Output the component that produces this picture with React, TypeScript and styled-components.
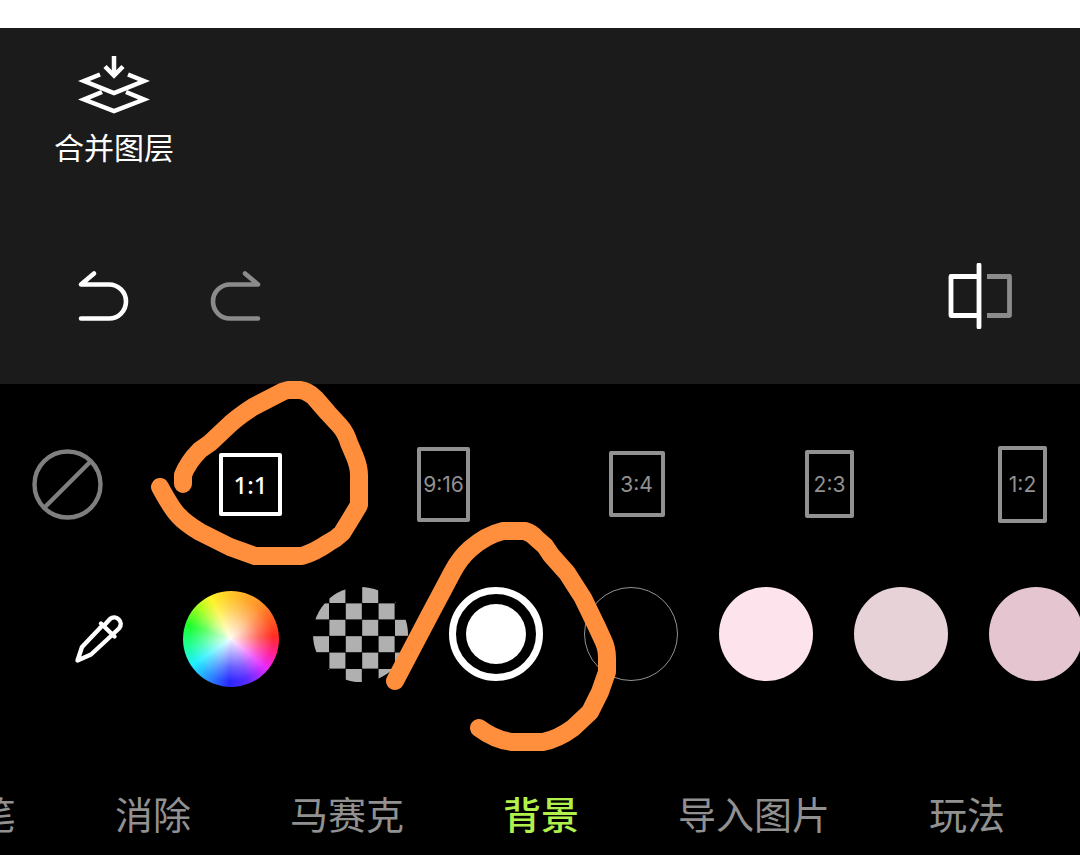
import React, { useState } from "react";
import styled, { createGlobalStyle } from "styled-components";

const GlobalStyle = createGlobalStyle`
  *, *::before, *::after { box-sizing: border-box; }
  body { margin: 0; background: #fff; font-family: "Noto Sans CJK SC", sans-serif; }
  button { margin: 0; padding: 0; border: 0; background: none; color: inherit; font: inherit; cursor: pointer; }
  svg { display: block; }
`;

const Page = styled.div`
  position: relative;
  display: flex;
  flex-direction: column;
  min-height: 100vh;
  padding-top: 28px;
  overflow: hidden;
`;

const Stage = styled.section`
  padding: 27px 67px 55px 54px;
  background: #1b1b1b;
  color: #fff;
`;

const LayerAction = styled.button`
  display: flex;
  flex-direction: column;
  align-items: center;
  gap: 13px;
  font-size: 30px;
  line-height: 36px;
`;

const HistoryBar = styled.div`
  display: flex;
  align-items: center;
  justify-content: space-between;
  margin-top: 99px;
  padding-left: 22px;
`;

const HistoryButtons = styled.div`
  display: flex;
  gap: 80px;
`;

const IconButton = styled.button<{ $dim?: boolean }>`
  color: ${(p) => (p.$dim ? "#8b8b8b" : "#fff")};
`;

const Panel = styled.section`
  flex: 1;
  padding-top: 60px;
  background: #000;
  color: #919191;
`;

const RatioRow = styled.div`
  display: flex;
  align-items: center;
  height: 80px;
  overflow: hidden;
`;

const NoRatio = styled.button`
  flex: none;
  width: 154px;
  padding-left: 32px;
  color: #7f7f7f;
`;

const RatioCell = styled.div`
  display: flex;
  flex: none;
  justify-content: center;
  width: 193px;
`;

const RatioButton = styled.button<{ $w: number; $h: number; $active: boolean }>`
  width: ${(p) => p.$w}px;
  height: ${(p) => p.$h}px;
  padding-top: 2px;
  border: 4px solid ${(p) => (p.$active ? "#fff" : "#919191")};
  border-radius: 2px;
  color: ${(p) => (p.$active ? "#fff" : "#919191")};
  font-family: ${(p) => (p.$active ? '"Noto Sans", sans-serif' : 'Inter, sans-serif')};
  font-weight: ${(p) => (p.$active ? 500 : 400)};
  font-size: ${(p) => (p.$active ? 24 : 21)}px;
  line-height: 24px;
  white-space: nowrap;
`;

const ColorRow = styled.div`
  display: flex;
  margin-top: 63px;
  overflow: hidden;
`;

const PickerGroup = styled.div`
  display: flex;
  flex: none;
  align-items: center;
  gap: 59px;
  width: 293px;
  padding: 4px 0 0 74px;
  color: #fff;
`;

const Wheel = styled.button`
  width: 96px;
  height: 96px;
  border-radius: 50%;
  background:
    radial-gradient(circle, rgba(255, 255, 255, 0.95) 0%, rgba(255, 255, 255, 0.65) 18%, rgba(255, 255, 255, 0.25) 42%, rgba(255, 255, 255, 0) 62%),
    conic-gradient(#ffc62a, #ff8f2a 42deg, #ff2d20 86deg, #ff20a0 112deg, #e62cff 130deg, #5a2cff 158deg, #2a28ff 182deg, #2c90ff 210deg, #20f0ff 236deg, #1eff90 262deg, #1eff2c 288deg, #a8ff20 314deg, #fff22a 334deg, #ffc62a);
`;

const SwatchCell = styled.div`
  display: flex;
  flex: none;
  align-items: flex-start;
  justify-content: center;
  width: 135px;
`;

const Swatch = styled.button<{ $color: string; $active: boolean; $outlined?: boolean }>`
  width: 94px;
  height: 94px;
  border: ${(p) => (p.$active ? "7px solid #fff" : p.$outlined ? "1px solid #929292" : "0")};
  border-radius: 50%;
  padding: ${(p) => (p.$active ? "10px" : "0")};
  background: ${(p) => p.$color};
  background-clip: ${(p) => (p.$active ? "content-box" : "border-box")};
`;

const Tabs = styled.nav`
  display: flex;
  gap: 99px;
  margin: 98px 0 0 -22px;
`;

const Tab = styled.button<{ $active: boolean }>`
  flex: none;
  color: ${(p) => (p.$active ? "#b2f04b" : "#919191")};
  font-weight: ${(p) => (p.$active ? 500 : 400)};
  font-size: 38px;
  line-height: 56px;
`;

const Markup = styled.svg`
  position: absolute;
  top: 0;
  left: 0;
  pointer-events: none;
`;

const MergeIcon = () => (
  <svg width="72" height="60" viewBox="0 0 72 60" fill="none" stroke="currentColor" strokeWidth="4.500">
    <path d="M36 1V20" />
    <path d="M27 11.500L36 20.500L45 11.500" />
    <path d="M22 19.500L6 26L36 38L66 26L50 19.500" />
    <path d="M24 37L6 44.500L36 56L66 44.500L48 37" />
  </svg>
);

const UndoIcon = () => (
  <svg width="54" height="54" viewBox="0 0 54 54" fill="none" stroke="currentColor" strokeWidth="4.600" strokeLinecap="round" strokeLinejoin="round">
    <path d="M18 4.500L5 15.500H33A17 17 0 0 1 33 49.500H5" />
  </svg>
);

const RedoIcon = () => (
  <svg width="54" height="54" viewBox="0 0 54 54" fill="none" stroke="currentColor" strokeWidth="4.600" strokeLinecap="round" strokeLinejoin="round">
    <path d="M35 4.500L48 15.500H20A17 17 0 0 0 20 49.500H48" />
  </svg>
);

const CompareIcon = () => (
  <svg width="66" height="66" viewBox="0 0 66 66" fill="none" strokeWidth="4.800" strokeLinejoin="round">
    <path d="M31 13.500H4V52.500H31" stroke="currentColor" />
    <path d="M32 2V64" stroke="currentColor" strokeLinecap="round" />
    <path d="M40 13.500H62.500V52.500H40" stroke="#8b8b8b" />
  </svg>
);

const NoneIcon = () => (
  <svg width="71" height="71" viewBox="0 0 71 71" fill="none" stroke="currentColor" strokeWidth="4.400">
    <circle cx="35.500" cy="35.500" r="33" />
    <path d="M58.500 12.500L12.500 58.500" />
  </svg>
);

const EyedropperIcon = () => (
  <svg width="50" height="50" viewBox="0 0 50 50" fill="none" stroke="currentColor" strokeWidth="4.400" strokeLinecap="round" strokeLinejoin="round">
    <path d="M27 13L8 33L3.500 46.500L17 40.500L37 22" />
    <path d="M27 9.500L40.500 22.500" />
    <path d="M30.500 11L36 5C41.500 0 50.500 7.500 45 14.500L38.500 20.500" />
  </svg>
);

const cells = [0, 1, 2, 3, 4, 5];

const Checkerboard = () => (
  <svg width="95" height="95" viewBox="0 0 95 95">
    <clipPath id="swatch-round">
      <circle cx="47.500" cy="47.500" r="47.500" />
    </clipPath>
    <g clipPath="url(#swatch-round)" fill="#b0b0b0">
      {cells.map((row) =>
        cells
          .filter((col) => (row + col) % 2 === 1)
          .map((col) => (
            <rect key={`${row}-${col}`} x={col * 16.4} y={row * 16.4} width="16" height="16" />
          ))
      )}
    </g>
  </svg>
);

const ratios = [
  { label: "1:1", w: 63, h: 63 },
  { label: "9:16", w: 53, h: 75 },
  { label: "3:4", w: 56, h: 66 },
  { label: "2:3", w: 49, h: 68 },
  { label: "1:2", w: 49, h: 77 },
];

const colors = [
  { name: "白色", value: "#ffffff" },
  { name: "黑色", value: "#000000", outlined: true },
  { name: "浅粉", value: "#fde3ec" },
  { name: "灰粉", value: "#e6d2d7" },
  { name: "豆沙粉", value: "#e5c5d0" },
];

const tabs = ["笔", "消除", "马赛克", "背景", "导入图片", "玩法"];

export default function App() {
  const [ratio, setRatio] = useState("1:1");
  const [color, setColor] = useState("#ffffff");
  const [tab, setTab] = useState("背景");

  return (
    <>
      <GlobalStyle />
      <Page>
        <Stage>
          <LayerAction type="button">
            <MergeIcon />
            合并图层
          </LayerAction>
          <HistoryBar>
            <HistoryButtons>
              <IconButton type="button" aria-label="撤销"><UndoIcon /></IconButton>
              <IconButton type="button" aria-label="重做" $dim><RedoIcon /></IconButton>
            </HistoryButtons>
            <IconButton type="button" aria-label="对比"><CompareIcon /></IconButton>
          </HistoryBar>
        </Stage>
        <Panel>
          <RatioRow>
            <NoRatio type="button" aria-label="无" onClick={() => setRatio("")}>
              <NoneIcon />
            </NoRatio>
            {ratios.map((r) => (
              <RatioCell key={r.label}>
                <RatioButton
                  type="button"
                  $w={r.w}
                  $h={r.h}
                  $active={r.label === ratio}
                  aria-pressed={r.label === ratio}
                  onClick={() => setRatio(r.label)}
                >
                  {r.label}
                </RatioButton>
              </RatioCell>
            ))}
          </RatioRow>
          <ColorRow>
            <PickerGroup>
              <IconButton type="button" aria-label="吸管"><EyedropperIcon /></IconButton>
              <Wheel type="button" aria-label="色盘" />
            </PickerGroup>
            <SwatchCell>
              <IconButton type="button" aria-label="透明" onClick={() => setColor("transparent")}>
                <Checkerboard />
              </IconButton>
            </SwatchCell>
            {colors.map((c) => (
              <SwatchCell key={c.value}>
                <Swatch
                  type="button"
                  aria-label={c.name}
                  aria-pressed={c.value === color}
                  $color={c.value}
                  $outlined={c.outlined}
                  $active={c.value === color}
                  onClick={() => setColor(c.value)}
                />
              </SwatchCell>
            ))}
          </ColorRow>
          <Tabs>
            {tabs.map((t) => (
              <Tab key={t} type="button" $active={t === tab} onClick={() => setTab(t)}>
                {t}
              </Tab>
            ))}
          </Tabs>
        </Panel>
        <Markup width="640" height="770" viewBox="0 0 640 770" fill="none" stroke="#ff8f3d" strokeWidth="18" strokeLinecap="round" strokeLinejoin="round" aria-hidden="true">
          <path d="M183 484L183 475Q188 462 200 450L210 443L227 427Q236 418 253 407L283 391.500L288 390H300Q308 391 315 398L328 413L340 426Q346 433 349 443L355 457Q359 467 359 475V505L350 520L342 533Q336 539 328 543Q315 552 302 556H255L230 547L200 532Q185 523 178 515Q172 509 160 487" />
          <path d="M395 681L427 620L453 571Q460 558 470 549Q486 535 503 531H525Q532 533 537 539L545 546L551 555L567 573L583 598L597 627L603 640Q607 648 607 658V672L600 692L590 712L573 728Q558 739 543 742H512Q495 740 479 728" />
        </Markup>
      </Page>
    </>
  );
}
